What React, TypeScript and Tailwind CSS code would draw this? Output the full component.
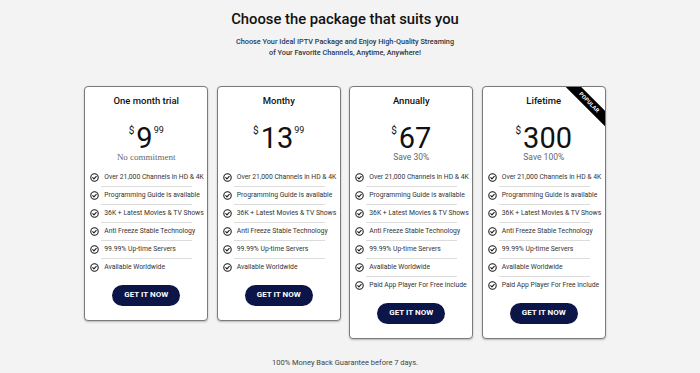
const base = [
  "Over 21,000 Channels in HD & 4K",
  "Programming Guide is available",
  "36K + Latest Movies & TV Shows",
  "Anti Freeze Stable Technology",
  "99.99% Up-time Servers",
  "Available Worldwide",
];

const plans = [
  { name: "One month trial", price: "9", cents: "99", note: "No commitment", serif: true, extra: false, popular: false },
  { name: "Monthy", price: "13", cents: "99", note: "", serif: false, extra: false, popular: false },
  { name: "Annually", price: "67", cents: "", note: "Save 30%", serif: false, extra: true, popular: false },
  { name: "Lifetime", price: "300", cents: "", note: "Save 100%", serif: false, extra: true, popular: true },
];

function CheckIcon() {
  return (
    <svg width="9" height="9" viewBox="0 0 16 16" fill="none" className="shrink-0">
      <circle cx="8" cy="8" r="6.6" stroke="#1a1a1a" strokeWidth="1.9" />
      <path d="M4.9 8.3l2.1 2.1 4.1-4.5" stroke="#1a1a1a" strokeWidth="1.9" strokeLinecap="round" strokeLinejoin="round" />
    </svg>
  );
}

function PlanCard({ plan }: { plan: (typeof plans)[number] }) {
  const features = plan.extra ? [...base, "Paid App Player For Free include"] : base;

  return (
    <div className="relative w-[124px] overflow-hidden rounded-[4px] border border-[#7a7a7a] bg-white shadow-[0_1px_2px_rgba(0,0,0,0.25)]">
      {plan.popular && (
        <div className="absolute top-[10px] right-[-19px] flex h-[11px] w-[70px] rotate-45 items-center justify-center bg-black text-[5.5px] font-bold tracking-[0.2px] text-white">
          POPULAR
        </div>
      )}

      <div className="flex flex-col items-center">
        <div className="pt-[7px] text-[9.5px] leading-[14px] font-medium text-[#111]">{plan.name}</div>

        <div className="mt-[16.5px] flex h-[26px] items-start text-[#111]">
          <span className="mt-[1px] mr-[2px] text-[10px] leading-none">$</span>
          <span className="text-[29px] leading-[26px]">{plan.price}</span>
          {plan.cents && <span className="mt-[1px] ml-[1px] text-[9px] leading-none">{plan.cents}</span>}
        </div>

        <div
          data-serif={plan.serif}
          className="mt-[1px] h-[10px] text-[8.5px] leading-[10px] text-[#666] data-[serif=true]:font-['Liberation_Serif',serif] data-[serif=true]:text-[9px]"
        >
          {plan.note}
        </div>
      </div>

      <div className="mt-[7px] px-[5px]">
        {features.map((f, i) => (
          <div key={f}>
            {i > 0 && <div className="ml-[11px] mr-[10px] h-px bg-[#dcdcdc]" />}
            <div className="flex h-[17px] items-center space-x-[5px]">
              <CheckIcon />
              <div className="text-[6.8px] whitespace-nowrap text-[#333]">{f}</div>
            </div>
          </div>
        ))}
      </div>

      <div className="flex justify-center pt-[9px] pb-[14px]">
        <div className="flex h-[21px] w-[68px] items-center justify-center rounded-full bg-[#0b1548] text-[8px] font-bold text-white">
          GET IT NOW
        </div>
      </div>
    </div>
  );
}

export default function App() {
  return (
    <div className="h-[373px] w-[700px] overflow-hidden bg-[#f3f3f3] font-['Roboto',sans-serif]">
      <div className="flex w-[690px] flex-col items-center">
        <h1 className="mt-[9px] text-[14.8px] leading-[20px] font-medium text-[#111]">
          Choose the package that suits you
        </h1>
        <p className="mt-[8px] text-center text-[7.3px] leading-[10.5px] font-medium text-[#333]">
          <span className="text-[#1f3a68]">Choose Your Ideal</span>{" "}
          <span className="text-[#1f3a68]">IPTV</span> Package and Enjoy{" "}
          <span className="text-[#1f3a68]">High-Quality</span> Streaming
          <br />
          of Your Favorite <span className="text-[#1f3a68]">Channels</span>, Anytime, Anywhere!
        </p>

        <div className="mt-[28px] flex items-start gap-[8.5px]">
          {plans.map((p) => (
            <PlanCard key={p.name} plan={p} />
          ))}
        </div>

        <div className="mt-[19px] text-[7.5px] leading-[10px] text-[#444]">
          100% Money Back Guarantee before 7 days.
        </div>
      </div>
    </div>
  );
}
